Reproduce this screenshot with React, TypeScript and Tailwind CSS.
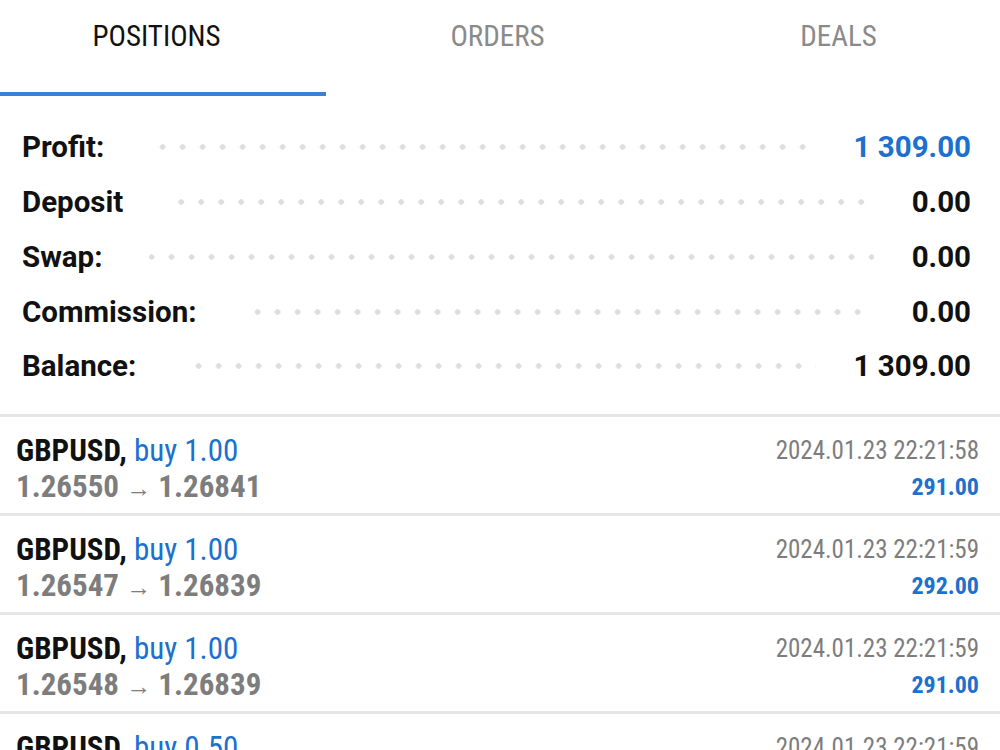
const cond = "font-['Roboto_Condensed','Roboto',sans-serif] [font-stretch:75%]";

const summary = [
  { label: "Profit:", value: "1 309.00", blue: true },
  { label: "Deposit", value: "0.00" },
  { label: "Swap:", value: "0.00" },
  { label: "Commission:", value: "0.00" },
  { label: "Balance:", value: "1 309.00" },
];

const deals = [
  { vol: "1.00", from: "1.26550", to: "1.26841", time: "2024.01.23 22:21:58", profit: "291.00" },
  { vol: "1.00", from: "1.26547", to: "1.26839", time: "2024.01.23 22:21:59", profit: "292.00" },
  { vol: "1.00", from: "1.26548", to: "1.26839", time: "2024.01.23 22:21:59", profit: "291.00" },
  { vol: "0.50", from: "1.26548", to: "1.26839", time: "2024.01.23 22:21:59", profit: "145.50" },
];

export default function App() {
  return (
    <div className="w-[1000px] h-[750px] overflow-hidden bg-white font-['Roboto',sans-serif]">
      {/* tabs */}
      <div className={`flex h-[96px] ${cond}`}>
        <div className="w-[326px] flex flex-col">
          <div className="flex-1 flex items-center justify-center pr-[13px] pb-[18px] text-[29px] text-[#111]">
            POSITIONS
          </div>
          <div className="h-[4px] bg-[#3b7fd8]" />
        </div>
        <div className="w-[343px] flex items-center justify-center pb-[22px] text-[29px] text-[#8a8a8a]">
          ORDERS
        </div>
        <div className="flex-1 flex items-center justify-center pl-[8px] pb-[22px] text-[29px] text-[#8a8a8a]">
          DEALS
        </div>
      </div>

      {/* summary */}
      <div className="flex flex-col pl-[22px] pr-[29px] pt-[24px] pb-[20px]">
        {summary.map((r) => (
          <div key={r.label} className="flex items-center h-[54.75px]">
            <span className="text-[29.5px] font-bold text-[#111]">{r.label}</span>
            <div className="flex-1 h-[6px] ml-[46px] mr-[38px] bg-[radial-gradient(circle,#dedede_2.5px,transparent_3px)] bg-[length:20px_6px] bg-center" />
            <span className={`text-[29.5px] font-bold ${r.blue ? "text-[#1c70d0]" : "text-[#111]"}`}>
              {r.value}
            </span>
          </div>
        ))}
      </div>

      {/* deals list */}
      <div className={cond}>
        {deals.map((d, i) => (
          <div key={i} className="border-t-[3px] border-[#e6e6e6] h-[99px] flex justify-between pl-[16px] pr-[21px] pt-[16px]">
            <div className="flex flex-col leading-[36px]">
              <div className="text-[31px]">
                <span className="font-bold text-[#111]">GBPUSD,</span>{" "}
                <span className="text-[#1c70d0]">buy {d.vol}</span>
              </div>
              <div className="text-[31px] font-bold text-[#7d7d7d]">
                {d.from} <span className="font-normal text-[25px]">→</span> {d.to}
              </div>
            </div>
            <div className="flex flex-col items-end">
              <div className="text-[25px] leading-[36px] text-[#7d7d7d]">{d.time}</div>
              <div className="text-[24px] leading-[36px] font-bold text-[#1c70d0]">{d.profit}</div>
            </div>
          </div>
        ))}
      </div>
    </div>
  );
}
